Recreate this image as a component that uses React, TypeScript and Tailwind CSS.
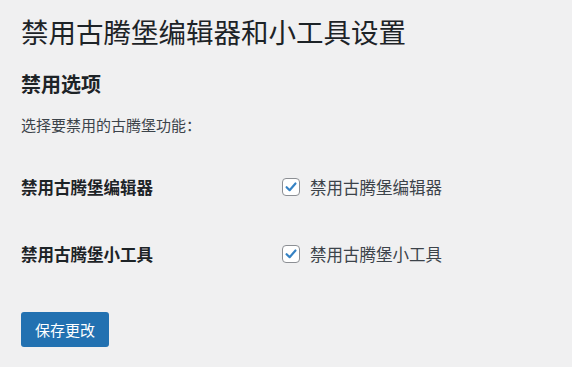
import React from "react";

function Check() {
  return (
    <span className="flex h-[18px] w-[18px] shrink-0 items-center justify-center rounded-[4px] border border-[#8c8f94] bg-white">
      <svg viewBox="0 0 20 20" className="h-[16px] w-[16px]">
        <path d="M4.5 10.2 L8.3 14 L15.6 5.6" fill="none" stroke="#3582c4" strokeWidth="2.7" strokeLinecap="round" strokeLinejoin="round" />
      </svg>
    </span>
  );
}

function Row({ label }: { label: string }) {
  return (
    <div className="flex h-[67px] items-center">
      <div className="w-[261px] text-[16.5px] font-bold leading-[24px] text-[#1d2327]">{label}</div>
      <label className="flex items-center gap-[10px]">
        <Check />
        <span className="text-[16.5px] leading-[24px] text-[#3c434a]">{label}</span>
      </label>
    </div>
  );
}

export default function App() {
  return (
    <div
      className="min-h-[367px] w-[572px] bg-[#f0f0f1] px-[21px] pt-[16px]"
      style={{ fontFamily: '"Noto Sans CJK SC", "Noto Sans", sans-serif' }}
    >
      <h1 className="text-[27.5px] font-normal leading-[31px] text-[#1d2327]">禁用古腾堡编辑器和小工具设置</h1>
      <h2 className="mt-[23px] text-[20px] font-bold leading-[28px] text-[#1d2327]">禁用选项</h2>
      <p className="mt-[16px] text-[15px] leading-[22px] text-[#3c434a]">选择要禁用的古腾堡功能：</p>
      <div className="mt-[17px]">
        <Row label="禁用古腾堡编辑器" />
        <Row label="禁用古腾堡小工具" />
      </div>
      <button className="mt-[25px] flex h-[35px] items-center rounded-[3px] bg-[#2271b1] px-[14px] text-[15px] leading-[20px] text-white">
        保存更改
      </button>
    </div>
  );
}
